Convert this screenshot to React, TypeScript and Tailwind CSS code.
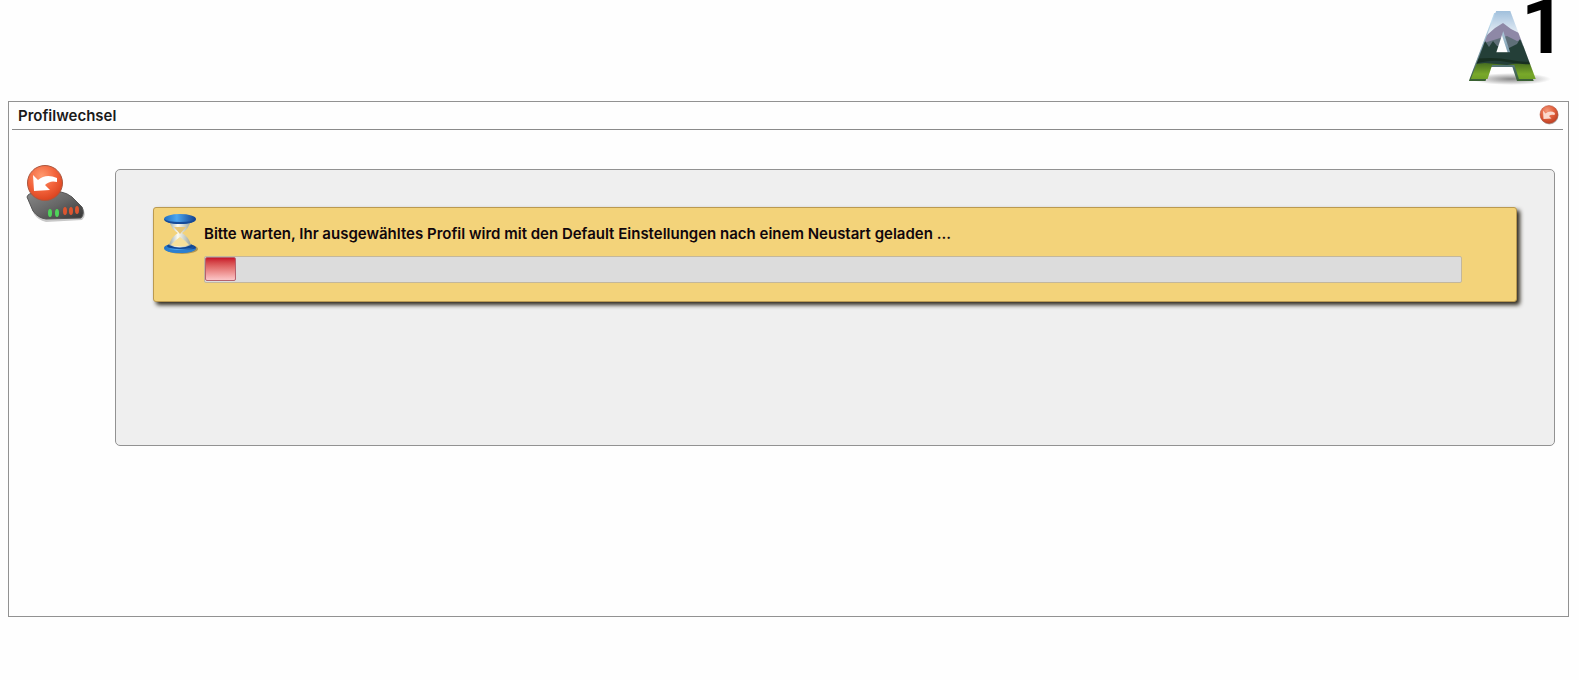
const PROGRESS = 2.5;

function Logo() {
  return (
    <svg viewBox="0 0 96 92" className="h-[92px] w-24 overflow-visible" role="img" aria-label="A1">
      <defs>
        <linearGradient id="sky" x1="0" y1="0" x2="0" y2="1">
          <stop offset="0" stopColor="#7fa9cf" />
          <stop offset="0.35" stopColor="#e2ebf4" />
        </linearGradient>
        <linearGradient id="side" x1="0" y1="0" x2="0" y2="1">
          <stop offset="0" stopColor="#7aa6cc" />
          <stop offset="0.25" stopColor="#c4e0f2" />
          <stop offset="0.5" stopColor="#86a3b4" />
          <stop offset="0.7" stopColor="#4a6a66" />
          <stop offset="0.85" stopColor="#2f5c12" />
        </linearGradient>
        <linearGradient id="grass" x1="0" y1="0" x2="0" y2="1">
          <stop offset="0" stopColor="#42681f" />
          <stop offset="0.4" stopColor="#78a82a" />
          <stop offset="1" stopColor="#5b8c1c" />
        </linearGradient>
        <radialGradient id="logoShadow">
          <stop offset="0" stopColor="#555" stopOpacity="0.7" />
          <stop offset="1" stopColor="#555" stopOpacity="0" />
        </radialGradient>
        <mask id="letter" maskUnits="userSpaceOnUse" x="0" y="0" width="96" height="92">
          <text x="5" y="78" fontSize="93" className="font-[Roboto] font-bold" fill="#fff" stroke="#fff" strokeWidth="2">A</text>
        </mask>
      </defs>
      <ellipse cx="44" cy="79" rx="40" ry="6" fill="url(#logoShadow)" />
      <text x="3" y="80" fontSize="93" className="font-[Roboto] font-bold" fill="url(#side)" stroke="url(#side)" strokeWidth="2">A</text>
      <g mask="url(#letter)">
        <rect width="96" height="92" fill="url(#sky)" />
        <path d="M0 42 L20 35 L28 28 L36 23 L44 29 L54 34 L80 42 V92 H0Z" fill="#8e88a6" />
        <path d="M0 46 L20 42 L30 39 L40 36 L50 41 L62 38 L80 44 V92 H0Z" fill="#5f6f78" />
        <path d="M0 54 L14 47 L18 41 L22 47 L26 41 L30 46 L42 48 L50 44 L53 39 L56 46 L61 42 L66 49 L80 50 V92 H0Z" fill="#243f38" />
        <path d="M0 65 L18 63 L40 65 L58 62 L80 64 V92 H0Z" fill="url(#grass)" />
        <path d="M0 60 Q24 56 44 60 T80 59 V63 Q60 66 40 62 T0 67Z" fill="#182f22" />
      </g>
      <text x="54" y="53" fontSize="78" className="font-[Roboto] font-bold" fill="#000">1</text>
    </svg>
  );
}

function ArrowBall({ className }: { className?: string }) {
  return (
    <svg viewBox="0 0 40 40" className={className} aria-hidden="true">
      <defs>
        <radialGradient id="ball" cx="0.4" cy="0.3" r="0.75">
          <stop offset="0" stopColor="#f49a7c" />
          <stop offset="0.5" stopColor="#e2623f" />
          <stop offset="1" stopColor="#bb3c20" />
        </radialGradient>
      </defs>
      <circle cx="21" cy="21" r="18" fill="#777" opacity="0.5" />
      <circle cx="20" cy="19" r="18" fill="url(#ball)" stroke="#a8452f" />
      <path d="M8 11 L13 17 Q22 10 32 16 L31 20 Q24 18 20 22 L25 27 L9 28Z" fill="#fbd9cd" />
    </svg>
  );
}

function RouterIcon() {
  return (
    <svg viewBox="0 0 60 58" className="h-[58px] w-[60px]" aria-hidden="true">
      <defs>
        <radialGradient id="badge" cx="0.4" cy="0.3" r="0.75">
          <stop offset="0" stopColor="#ff9a70" />
          <stop offset="0.55" stopColor="#f2623a" />
          <stop offset="1" stopColor="#d8401c" />
        </radialGradient>
        <linearGradient id="case" x1="0" y1="0" x2="1" y2="1">
          <stop offset="0" stopColor="#8a8a8a" />
          <stop offset="0.5" stopColor="#666" />
          <stop offset="1" stopColor="#333" />
        </linearGradient>
      </defs>
      <path d="M2 32 Q4 29 10 29 L36 28 Q41 28 46 33 L57 43 Q61 51 56 55 L20 57 Q12 55 8 49Z" fill="#888" opacity="0.45" />
      <path d="M1 32 Q2 28 9 28 L35 27 Q41 28 46 32 L56 42 Q59 49 55 53 L20 54 Q12 53 7 46Z" fill="url(#case)" stroke="#555" />
      <circle cx="19" cy="18" r="17.5" fill="url(#badge)" stroke="#a9573f" />
      <path d="M7 10 L12 15 Q20 8 31 13 L31 17 Q24 15 19 20 L24 25 L8 26Z" fill="#fff" />
      <g fill="#4fd45a">
        <ellipse cx="24" cy="48" rx="2" ry="4" />
        <ellipse cx="31" cy="48" rx="2" ry="4" />
      </g>
      <g fill="#dc5530">
        <ellipse cx="39" cy="46" rx="2" ry="4" />
        <ellipse cx="45" cy="46" rx="2" ry="4" />
        <ellipse cx="51" cy="45" rx="2" ry="4" />
      </g>
    </svg>
  );
}

function Hourglass() {
  return (
    <svg viewBox="0 0 34 41" className="h-[41px] w-[34px] shrink-0" aria-hidden="true">
      <defs>
        <linearGradient id="cap" x1="0" y1="0" x2="1" y2="0">
          <stop offset="0" stopColor="#1f6ec0" />
          <stop offset="0.4" stopColor="#4ba6f0" />
          <stop offset="1" stopColor="#123f8c" />
        </linearGradient>
        <linearGradient id="glass" x1="0" y1="0" x2="1" y2="0">
          <stop offset="0" stopColor="#9aa9a8" />
          <stop offset="0.4" stopColor="#fdfcf2" />
          <stop offset="1" stopColor="#9ba59b" />
        </linearGradient>
      </defs>
      <ellipse cx="18" cy="35" rx="16" ry="5" fill="#6b5a2c" opacity="0.5" />
      <ellipse cx="16" cy="34" rx="16" ry="5" fill="url(#cap)" />
      <ellipse cx="16" cy="32" rx="13" ry="3" fill="#0f4795" />
      <path d="M5 6 Q7 15 14 19 Q7 23 5 31 Q16 36 27 31 Q25 23 18 19 Q25 15 27 6Z" fill="url(#glass)" />
      <path d="M10 13 H22 L16 20Z" fill="#e6c677" />
      <path d="M16 23 Q22 27 25 31 Q16 34 7 31 Q10 27 16 23Z" fill="#f6e09a" />
      <ellipse cx="16" cy="5" rx="16" ry="5" fill="url(#cap)" />
      <path d="M0 5 Q1 10 16 10 Q31 10 32 5 Q29 8 16 8 Q3 8 0 5Z" fill="#174a97" />
      <path d="M0 34 Q1 39 16 39 Q31 39 32 34 Q29 36 16 36 Q3 36 0 34Z" fill="#2b7fd0" />
    </svg>
  );
}

export default function App() {
  return (
    <div className="min-h-screen bg-[#fefefe] font-[Inter,sans-serif] text-[15px] font-semibold text-black">
      <header className="flex h-[101px] justify-end pr-4">
        <Logo />
      </header>

      <main className="mr-2.5 ml-2 min-h-[516px] border border-[#929292]">
        <div className="mr-[5px] ml-[3px] flex h-7 items-center justify-between border-b border-[#8a8a8a] pr-1 pl-1.5">
          <h1 className="pt-0.5 text-[#1a1a1a]">Profilwechsel</h1>
          <button type="button" aria-label="Zurück" className="mb-0.5 cursor-pointer">
            <ArrowBall className="size-5" />
          </button>
        </div>

        <div className="flex pt-[39px] pr-[13px] pl-[17px]">
          <div className="-mt-1 w-[89px] shrink-0">
            <RouterIcon />
          </div>

          <section className="min-h-[277px] flex-1 rounded-[5px] border border-[#929292] bg-[#efefef] p-[37px]">
            <div className="flex h-[95px] rounded-[3px] border border-[#bb9a50] bg-[#f3d37a] pt-1.5 pr-[54px] pl-2.5 shadow-[3px_3px_4px_#2f2a1e]">
              <Hourglass />
              <div className="ml-1.5 flex-1 pt-2">
                <p id="status" className="leading-6 text-[#10060c]">
                  Bitte warten, Ihr ausgewähltes Profil wird mit den Default Einstellungen nach einem Neustart geladen ...
                </p>
                <div
                  role="progressbar"
                  aria-labelledby="status"
                  aria-valuenow={PROGRESS}
                  className="mt-2.5 h-[27px] rounded-xs border border-[#c3b79c] bg-[#dcdcdc] pb-px"
                >
                  <div
                    className="h-full rounded-xs border border-[#b5616d] bg-linear-to-b from-[#c8102a] to-[#fbc6c8]"
                    style={{ width: `${PROGRESS}%` }}
                  />
                </div>
              </div>
            </div>
          </section>
        </div>
      </main>
    </div>
  );
}
